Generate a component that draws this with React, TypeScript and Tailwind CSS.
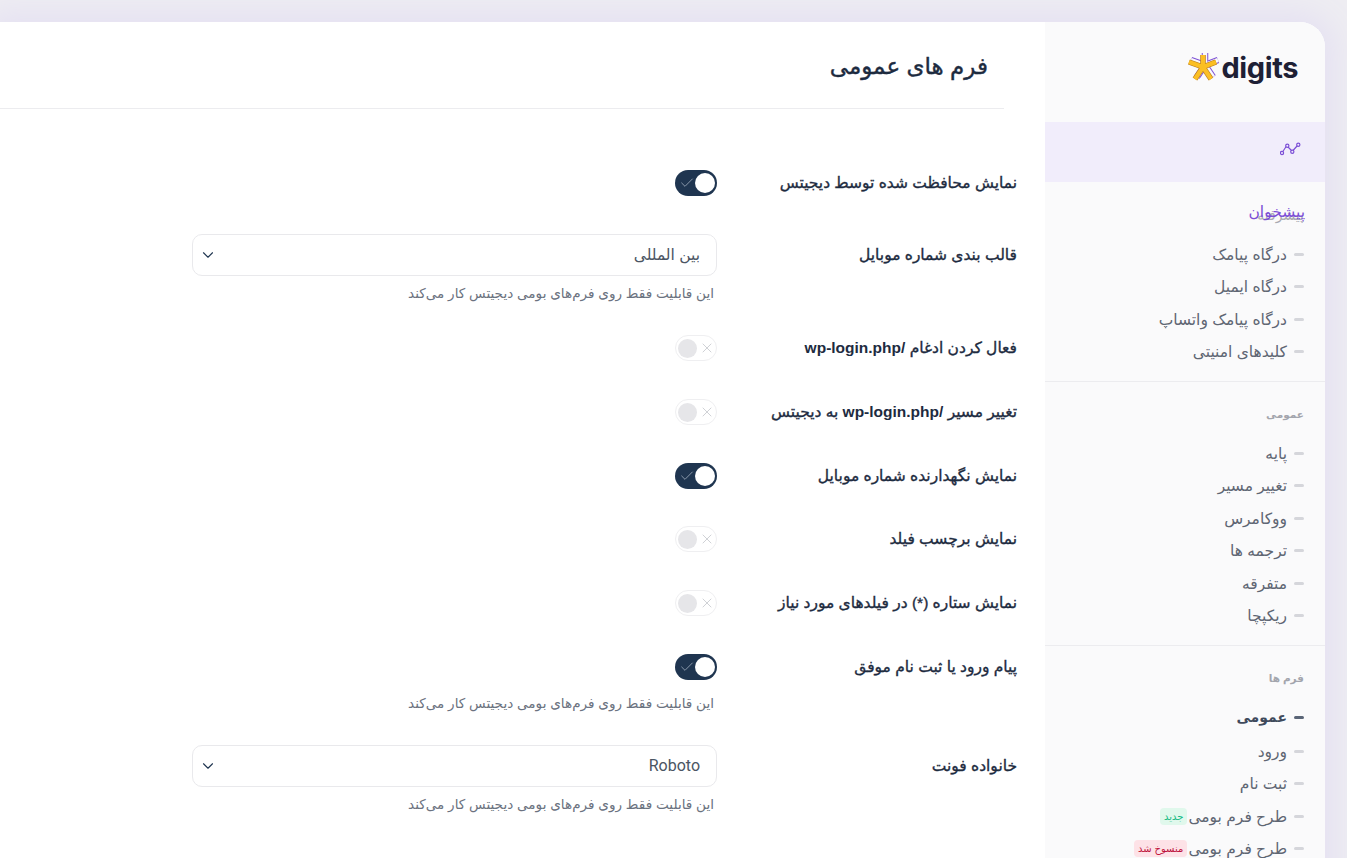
import { Check, ChevronDown, X } from 'lucide-react'

const hint = 'این قابلیت فقط روی فرم‌های بومی دیجیتس کار می‌کند'

function Toggle({ on }: { on?: boolean }) {
  if (on) {
    return (
      <div dir="ltr" className="flex h-[26px] w-[42px] items-center justify-between rounded-full bg-[#1f3550] pl-[4px] pr-[2px]">
        <Check size={16} strokeWidth={1.3} className="text-[#9aa7b8]" />
        <span className="h-[20px] w-[20px] rounded-full bg-white" />
      </div>
    )
  }
  return (
    <div dir="ltr" className="flex h-[26px] w-[42px] items-center justify-between rounded-full border border-[#efeff1] bg-white pl-[2px] pr-[1px]">
      <span className="h-[19px] w-[19px] rounded-full bg-[#e6e6e9]" />
      <X size={16} strokeWidth={1.3} className="text-[#c9cbd0]" />
    </div>
  )
}

function Select({ value, latin }: { value: string; latin?: boolean }) {
  return (
    <div className="flex h-[42px] w-[525px] items-center justify-between rounded-[10px] border border-[#e9e9ec] bg-white pl-[6px] pr-[16px] text-[#4b5563]">
      <span className={latin ? 'text-[16px] [font-family:Roboto,sans-serif]' : 'text-[15.5px]'}>{value}</span>
      <ChevronDown size={18} strokeWidth={1.5} className="text-[#1f3550]" />
    </div>
  )
}

function Row({ label, children, hintText, hintGap, gap = 'mb-[38px]' }: { label: React.ReactNode; children: React.ReactNode; hintText?: boolean; hintGap?: string; gap?: string }) {
  return (
    <div className={gap}>
      <div className="flex items-center">
        <div className="w-[300px] shrink-0 text-[15.5px] text-[#1d2b3f] [-webkit-text-stroke:0.35px_#1d2b3f]">{label}</div>
        {children}
      </div>
      {hintText && (
        <div className={`mb-[-6px] mr-[303px] h-[18px] text-[13.6px] leading-[18px] text-[#6b7280] ${hintGap}`}>{hint}</div>
      )}
    </div>
  )
}

function NavItem({ label, active, badge }: { label: string; active?: boolean; badge?: React.ReactNode }) {
  return (
    <div className={`flex h-[32.5px] items-center pr-[21px] ${active ? 'mb-[1.5px] text-[14px] font-bold text-[#3f4a5c]' : 'text-[15.5px] text-[#5f6673]'}`}>
      <span className={`ml-[7px] h-[3px] w-[10px] shrink-0 rounded-full ${active ? 'bg-[#5a6577]' : 'bg-[#d5d6db]'}`} />
      <span className="whitespace-nowrap">{label}</span>
      {badge}
    </div>
  )
}

function Heading({ label }: { label: string }) {
  return <div className="mb-[14px] h-[18px] pr-[21px] text-[10.5px] font-semibold leading-[18px] text-[#a3a5ad]">{label}</div>
}

const arms = ['M16 15L16 3', 'M16 15L29 10', 'M16 15L24 27', 'M16 15L8 27', 'M16 15L2 10']

function Logo() {
  return (
    <svg width="33" height="30" viewBox="0 0 33 30" fill="none">
      <g transform="translate(2 -2)">
        {arms.map((d) => <path key={d} d={d} stroke="#7c4fd6" strokeWidth="6.500" />)}
        {arms.map((d) => <path key={d} d={d} stroke="#fafafb" strokeWidth="4.500" />)}
      </g>
      {arms.map((d) => <path key={d} d={d} stroke="#b7791f" strokeWidth="5.500" />)}
      {arms.map((d) => <path key={d} d={d} stroke="#fbbf24" strokeWidth="4.200" />)}
    </svg>
  )
}

export default function App() {
  return (
    <div
      dir="rtl"
      className="flex h-screen items-start overflow-hidden bg-[#eeedf2] pr-[22px] pt-[22px]"
      style={{ fontFamily: '"Liberation Sans", "DejaVu Sans", sans-serif' }}
    >
      <div className="flex min-h-[900px] flex-1 overflow-hidden rounded-tr-[25px] bg-white shadow-[0_0_30px_10px_#e5e1f2]">
        <aside className="w-[280px] shrink-0 bg-[#fafafb]">
          <div dir="ltr" className="flex h-[100px] items-center justify-end gap-[1px] pb-[10px] pr-[27px]">
            <Logo />
            <span className="text-[29px] font-bold leading-none tracking-[-0.4px] text-[#1e2035]" style={{ fontFamily: 'Inter, sans-serif' }}>digits</span>
          </div>
          <div className="flex h-[60px] items-center bg-[#f1edfb] pb-[7px] pr-[23px]">
            <svg width="22" height="14" viewBox="0 0 22 14" fill="none" stroke="#7c4fd6" strokeWidth="1.2">
              <path d="M2.500 10l4-6M8 5l4 4M13 8.500l4.500-5" />
              <circle cx="2" cy="11" r="1.600" fill="#f1edfb" />
              <circle cx="7.300" cy="3.700" r="1.600" fill="#f1edfb" />
              <circle cx="12.300" cy="9.700" r="1.600" fill="#f1edfb" />
              <circle cx="18.300" cy="2.700" r="1.600" fill="#f1edfb" />
            </svg>
          </div>
          <div className="relative pb-[13px] pt-[24px]">
            <div className="mb-[14px] h-[18px] pr-[21px] text-[14px] leading-[18px] text-[#a9aab1]">پیشرفته</div>
            <div className="absolute right-[20px] top-[19px] text-[15.5px] leading-[22px] text-[#7c4fd6]">پیشخوان</div>
            <NavItem label="درگاه پیامک" />
            <NavItem label="درگاه ایمیل" />
            <NavItem label="درگاه پیامک واتساپ" />
            <NavItem label="کلیدهای امنیتی" />
          </div>
          <div className="border-t border-[#ececef] pb-[13px] pt-[23px]">
            <Heading label="عمومی" />
            <NavItem label="پایه" />
            <NavItem label="تغییر مسیر" />
            <NavItem label="ووکامرس" />
            <NavItem label="ترجمه ها" />
            <NavItem label="متفرقه" />
            <NavItem label="ریکپچا" />
          </div>
          <div className="border-t border-[#ececef] pt-[23px]">
            <Heading label="فرم ها" />
            <NavItem label="عمومی" active />
            <NavItem label="ورود" />
            <NavItem label="ثبت نام" />
            <NavItem
              label="طرح فرم بومی"
              badge={<span className="mr-[1px] rounded-[4px] bg-[#e0f8ec] px-[4px] py-[1px] text-[10px] text-[#10b981]">جدید</span>}
            />
            <NavItem
              label="طرح فرم بومی"
              badge={<span className="mr-[1px] rounded-[4px] bg-[#fde2e7] px-[4px] py-[1px] text-[10px] text-[#be123c]">منسوخ شد</span>}
            />
          </div>
        </aside>
        <main className="flex-1 pr-[28px]">
          <div className="mr-[13px] flex h-[87px] items-center border-b border-[#ececef] pr-[16px] pt-[3px] text-[23px] text-[#1d2b3f] [-webkit-text-stroke:0.4px_#1d2b3f]">
            فرم های عمومی
          </div>
          <div className="pt-[61px]">
            <Row label="نمایش محافظت شده توسط دیجیتس"><Toggle on /></Row>
            <Row label="قالب بندی شماره موبایل" hintText hintGap="mt-[9px]"><Select value="بین المللی" /></Row>
            <Row label={<>فعال کردن ادغام <span className="font-bold [-webkit-text-stroke:0]">/wp-login.php</span></>}><Toggle /></Row>
            <Row label={<>تغییر مسیر <span className="font-bold [-webkit-text-stroke:0]">/wp-login.php</span> به دیجیتس</>}><Toggle /></Row>
            <Row label="نمایش نگهدارنده شماره موبایل" gap="mb-[37px]"><Toggle on /></Row>
            <Row label="نمایش برچسب فیلد"><Toggle /></Row>
            <Row label="نمایش ستاره (*) در فیلدهای مورد نیاز"><Toggle /></Row>
            <Row label="پیام ورود یا ثبت نام موفق" hintText hintGap="mt-[15px]"><Toggle on /></Row>
            <Row label="خانواده فونت" hintText hintGap="mt-[9px]"><Select value="Roboto" latin /></Row>
          </div>
        </main>
      </div>
    </div>
  )
}
